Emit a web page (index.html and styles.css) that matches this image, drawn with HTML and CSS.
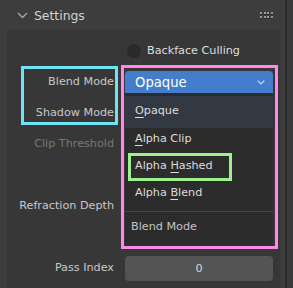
FILE: index.html
```html
<!DOCTYPE html>
<html>
<head>
<meta charset="utf-8">
<link rel="stylesheet" href="styles.css">
</head>
<body>
<div class="editor">
  <div class="region">
    <div class="panel-header">
      <svg class="chevron" width="11" height="7" viewBox="0 0 11 7"><path d="M1 1 L5.5 5.5 L10 1" fill="none" stroke="#a9a9a9" stroke-width="1.3"/></svg>
      <span class="panel-title">Settings</span>
      <span class="grip">
        <i></i><i></i><i></i><i></i><i></i><i></i><i></i><i></i>
      </span>
    </div>
    <div class="panel-body">
      <div class="row">
        <span class="label"></span>
        <span class="check"><span class="circle"></span><span class="check-text">Backface Culling</span></span>
      </div>
      <div class="row">
        <span class="label">Blend Mode</span>
        <span class="dropdown active"><span>Opaque</span>
          <svg class="dd-chev" width="8" height="5" viewBox="0 0 8 5"><path d="M0.7 0.7 L4 4 L7.3 0.7" fill="none" stroke="#cfdcf0" stroke-width="1.2"/></svg>
        </span>
      </div>
      <div class="row">
        <span class="label">Shadow Mode</span>
        <span class="dropdown ghost"></span>
      </div>
      <div class="row">
        <span class="label dim">Clip Threshold</span>
        <span></span>
      </div>
      <div class="row"><span class="label"></span><span></span></div>
      <div class="row">
        <span class="label">Refraction Depth</span>
        <span></span>
      </div>
      <div class="row"><span class="label"></span><span></span></div>
      <div class="row">
        <span class="label">Pass Index</span>
        <span class="number">0</span>
      </div>
    </div>
  </div>
  <div class="divider"></div>
  <div class="scroll"></div>
</div>

<div class="menu">
  <div class="menu-item current"><span class="ul">O</span>paque</div>
  <div class="menu-item"><span class="ul">A</span>lpha Clip</div>
  <div class="menu-item">Alpha <span class="ul">H</span>ashed</div>
  <div class="menu-item">Alpha <span class="ul">B</span>lend</div>
  <div class="menu-sep"></div>
  <div class="menu-title">Blend Mode</div>
</div>

<div class="mark mark-cyan"></div>
<div class="mark mark-pink"></div>
<div class="mark mark-green"></div>
</body>
</html>
```
FILE: styles.css
```css
html, body {
  margin: 0;
  padding: 0;
}
body {
  width: 293px;
  height: 288px;
  overflow: hidden;
  background: #3d3d3d;
  font-family: "DejaVu Sans", sans-serif;
  font-size: 11.2px;
  color: #cacaca;
  position: relative;
}
.editor {
  display: flex;
  height: 288px;
}
.region {
  width: 285px;
  background: #3d3d3d;
}
.divider {
  width: 2px;
  background: #2c2c2c;
}
.scroll {
  flex: 1;
  background: #3a3a3a;
}
.panel-header {
  height: 30px;
  display: flex;
  align-items: center;
  padding-left: 17px;
  box-sizing: border-box;
}
.chevron {
  margin-top: 1px;
}
.panel-title {
  margin-left: 6px;
  font-size: 12.4px;
  color: #d2d2d2;
}
.grip {
  margin-left: auto;
  margin-right: 12px;
  width: 13px;
  display: grid;
  grid-template-columns: repeat(4, 2px);
  column-gap: 1.5px;
  row-gap: 2px;
}
.grip i {
  width: 2px;
  height: 2px;
  background: #9a9a9a;
  box-shadow: 0 1px 0 #262626;
}
.panel-body {
  margin-left: 7px;
  width: 273px;
  height: 258px;
  background: #373737;
  padding-top: 5px;
  box-sizing: border-box;
}
.row {
  height: 31px;
  display: grid;
  grid-template-columns: 107px 148px;
  column-gap: 11px;
  align-items: center;
}
.label {
  text-align: right;
  color: #c8c8c8;
}
.label.dim {
  color: #777777;
}
.check {
  display: flex;
  align-items: center;
  padding-left: 2px;
}
.circle {
  width: 14px;
  height: 14px;
  border-radius: 50%;
  background: #2a2a2a;
}
.check-text {
  margin-left: 6px;
  color: #dedede;
}
.dropdown {
  height: 23px;
  display: flex;
  align-items: center;
  padding-left: 10px;
  padding-right: 6px;
  box-sizing: border-box;
}
.dropdown.active {
  background: #447dcc;
  color: #ffffff;
  font-size: 13.2px;
  border-radius: 4px 4px 0 0;
  margin-top: 1px;
}
.dd-chev {
  margin-left: auto;
  margin-right: 2px;
}
.number {
  height: 25px;
  border-radius: 4px;
  background: #545454;
  color: #d8d8d8;
  display: flex;
  align-items: center;
  justify-content: center;
  margin-top: 2px;
}
.menu {
  position: absolute;
  left: 125px;
  top: 93px;
  width: 148px;
  height: 153px;
  background: #2c2c2c;
  padding-top: 3px;
  box-sizing: border-box;
}
.menu-item {
  height: 27px;
  line-height: 27px;
  padding-left: 10px;
  color: #dcdcdc;
}
.menu-item.current {
  background: #323943;
  height: 32px;
  line-height: 30px;
  margin-bottom: -3px;
}
.ul {
  text-decoration: underline;
  text-underline-offset: 3px;
  text-decoration-thickness: 1px;
}
.menu-sep {
  margin-top: 5px;
  height: 1px;
  background: #444444;
}
.menu-title {
  height: 30px;
  line-height: 30px;
  padding-left: 6px;
  color: #c4c4c4;
}
.mark {
  position: absolute;
  box-sizing: border-box;
  border: 3px solid;
}
.mark-cyan {
  left: 21px;
  top: 66px;
  width: 97px;
  height: 59px;
  border-color: #6fe3f5;
}
.mark-pink {
  left: 121px;
  top: 65px;
  width: 157px;
  height: 184px;
  border-color: #ff86ea;
}
.mark-green {
  left: 128px;
  top: 153px;
  width: 104px;
  height: 28px;
  border-color: #9ff08f;
}
```
